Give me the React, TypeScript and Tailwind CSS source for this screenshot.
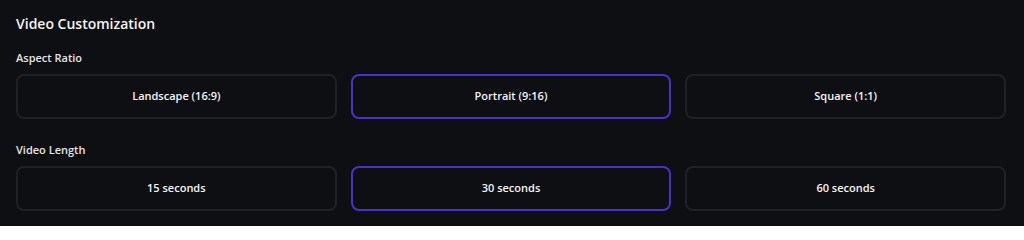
import { useState } from "react";

const ratios = ["Landscape (16:9)", "Portrait (9:16)", "Square (1:1)"];
const lengths = ["15 seconds", "30 seconds", "60 seconds"];

function OptionGroup({
  label,
  options,
  value,
  onChange,
}: {
  label: string;
  options: string[];
  value: string;
  onChange: (v: string) => void;
}) {
  return (
    <div>
      <div className="mb-[8px] text-[11px] font-semibold leading-4 text-[#e4e4e7]">
        {label}
      </div>
      <div className="grid grid-cols-3 gap-[14px]">
        {options.map((opt) => (
          <button
            key={opt}
            type="button"
            onClick={() => onChange(opt)}
            className={
              opt === value
                ? "h-[45px] rounded-lg border-2 border-[#4b2fc9] bg-transparent text-[11px] font-semibold text-[#f4f4f5]"
                : "h-[45px] rounded-lg border-2 border-[#202125] bg-transparent text-[11px] font-semibold text-[#f4f4f5]"
            }
          >
            {opt}
          </button>
        ))}
      </div>
    </div>
  );
}

export default function App() {
  const [ratio, setRatio] = useState("Portrait (9:16)");
  const [length, setLength] = useState("30 seconds");

  return (
    <div
      className="h-[226px] w-full bg-[#0e0f12] pl-4 pr-[18px] pt-[14px]"
      style={{ fontFamily: '"Open Sans", "Noto Sans", sans-serif' }}
    >
      <h2 className="mb-[16px] text-[14px] font-semibold leading-5 text-[#f4f4f5]">
        Video Customization
      </h2>
      <div className="flex flex-col gap-[23px]">
        <OptionGroup label="Aspect Ratio" options={ratios} value={ratio} onChange={setRatio} />
        <OptionGroup label="Video Length" options={lengths} value={length} onChange={setLength} />
      </div>
    </div>
  );
}
